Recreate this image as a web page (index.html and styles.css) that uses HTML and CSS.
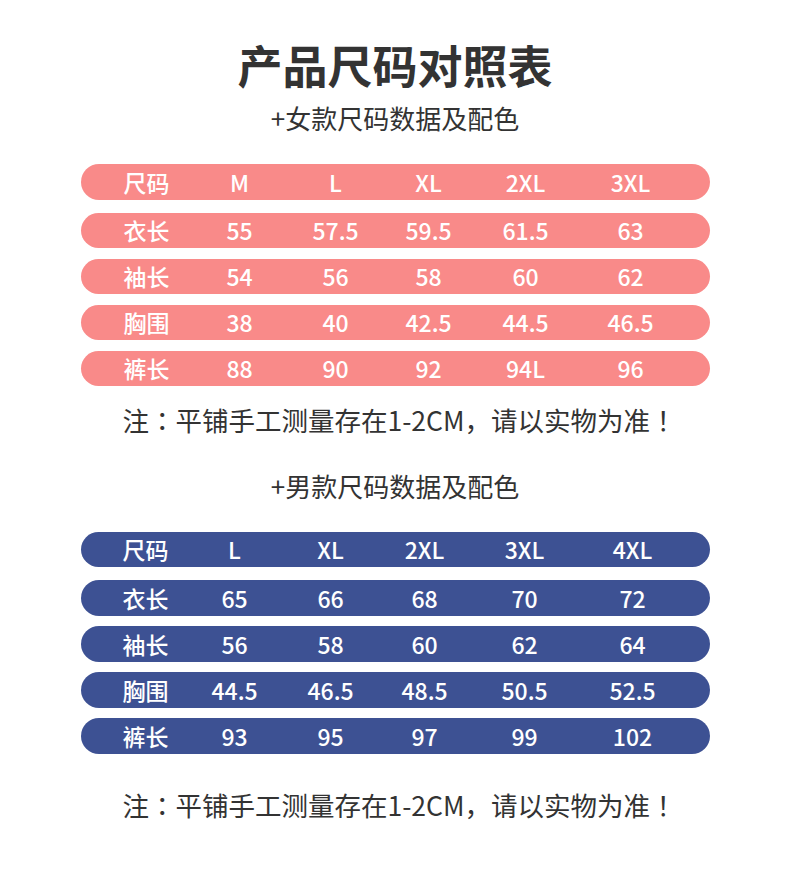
FILE: index.html
```html
<!DOCTYPE html>
<html lang="zh-CN">
<head>
<meta charset="utf-8">
<title>产品尺码对照表</title>
<link rel="stylesheet" href="styles.css">
</head>
<body>
<main class="page">
  <h1 class="title">产品尺码对照表</h1>
  <h2 class="subtitle sub-women">+女款尺码数据及配色</h2>
  <section class="table pink">
    <div class="row head"><span>尺码</span><span>M</span><span>L</span><span>XL</span><span>2XL</span><span>3XL</span></div>
    <div class="row"><span>衣长</span><span>55</span><span>57.5</span><span>59.5</span><span>61.5</span><span>63</span></div>
    <div class="row"><span>袖长</span><span>54</span><span>56</span><span>58</span><span>60</span><span>62</span></div>
    <div class="row"><span>胸围</span><span>38</span><span>40</span><span>42.5</span><span>44.5</span><span>46.5</span></div>
    <div class="row"><span>裤长</span><span>88</span><span>90</span><span>92</span><span>94L</span><span>96</span></div>
  </section>
  <p class="note note-1">注<span class="pc" lang="zh-Hant">：</span>平铺手工测量存在1-2CM，请以实物为准<span class="pc" lang="zh-Hant">！</span></p>
  <h2 class="subtitle sub-men">+男款尺码数据及配色</h2>
  <section class="table blue">
    <div class="row head"><span>尺码</span><span>L</span><span>XL</span><span>2XL</span><span>3XL</span><span>4XL</span></div>
    <div class="row"><span>衣长</span><span>65</span><span>66</span><span>68</span><span>70</span><span>72</span></div>
    <div class="row"><span>袖长</span><span>56</span><span>58</span><span>60</span><span>62</span><span>64</span></div>
    <div class="row"><span>胸围</span><span>44.5</span><span>46.5</span><span>48.5</span><span>50.5</span><span>52.5</span></div>
    <div class="row"><span>裤长</span><span>93</span><span>95</span><span>97</span><span>99</span><span>102</span></div>
  </section>
  <p class="note note-2">注<span class="pc" lang="zh-Hant">：</span>平铺手工测量存在1-2CM，请以实物为准<span class="pc" lang="zh-Hant">！</span></p>
</main>
</body>
</html>
```

FILE: styles.css
```css
html, body {
  margin: 0;
  padding: 0;
  background: #ffffff;
}

body {
  width: 790px;
  height: 876px;
  overflow: hidden;
  font-family: "Noto Sans CJK SC", "Noto Sans", sans-serif;
  color: #333333;
}

.page {
  display: flex;
  flex-direction: column;
  align-items: center;
  padding-top: 40px;
}

.title {
  margin: 0;
  font-size: 45px;
  line-height: 50px;
  font-weight: 700;
  color: #333333;
}

.subtitle {
  margin: 0;
  font-size: 26px;
  line-height: 30px;
  font-weight: 400;
  color: #333333;
}

.sub-women {
  margin-top: 13px;
}

.sub-men {
  margin-top: 35px;
}

.table {
  display: flex;
  flex-direction: column;
  gap: 11px;
  width: 629px;
}

.pink {
  margin-top: 31px;
}

.blue {
  margin-top: 31px;
  gap: 10px;
}

.row {
  display: grid;
  grid-template-columns: 92px 94px 98px 88px 106px 104px;
  align-items: center;
  height: 35px;
  padding-left: 20px;
  border-radius: 18px;
  color: #ffffff;
  font-size: 23px;
  font-weight: 500;
  line-height: 35px;
}

.row > span {
  text-align: center;
  white-space: nowrap;
}

.row.head {
  height: 36px;
  margin-bottom: 2px;
}

.pink .row {
  background: #f98a89;
}

.blue .row {
  background: #3d5193;
  height: 36px;
  grid-template-columns: 90px 88px 104px 84px 116px 100px;
}

.blue .row.head {
  height: 35px;
  margin-bottom: 3px;
}

.note {
  margin: 0 0 0 9px;
  font-size: 26.5px;
  line-height: 32px;
  color: #333333;
  white-space: nowrap;
}

/* full-width punctuation drawn centred (traditional-style forms) */
.pc {
  font-family: "Noto Sans CJK TC", "Noto Sans CJK SC", sans-serif;
}

.note-1 {
  margin-top: 18px;
}

.note-2 {
  margin-top: 35px;
}
```
